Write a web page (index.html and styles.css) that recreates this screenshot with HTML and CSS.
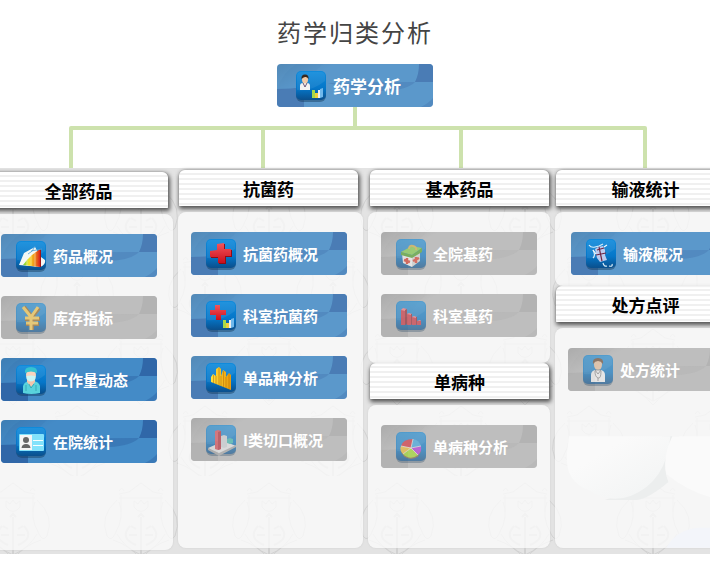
FILE: index.html
```html
<!DOCTYPE html>
<html lang="zh-CN">
<head>
<meta charset="utf-8">
<meta name="viewport" content="width=device-width, initial-scale=1">
<title>药学归类分析</title>
<link rel="stylesheet" href="styles.css">
</head>
<body>
<svg class="defs" aria-hidden="true">
  <defs>
    <linearGradient id="tile-fill" x1="0" y1="0" x2="0" y2="1">
      <stop offset="0" stop-color="#0f8bdc"/><stop offset=".6" stop-color="#0576c8"/><stop offset="1" stop-color="#0a4f8c"/>
    </linearGradient>
    <linearGradient id="corner" x1="0" y1="0" x2="1" y2="1">
      <stop offset="0" stop-color="#000" stop-opacity=".1"/><stop offset=".5" stop-color="#000" stop-opacity="0"/>
    </linearGradient>
    <linearGradient id="spectrum"><stop offset="0" stop-color="#5fd03c"/><stop offset=".35" stop-color="#f5e222"/><stop offset=".7" stop-color="#f08a1a"/><stop offset="1" stop-color="#d8201c"/></linearGradient>
    <linearGradient id="gold"><stop offset="0" stop-color="#ffe23c"/><stop offset="1" stop-color="#e79a0c"/></linearGradient>
    <linearGradient id="red" x1="0" y1="0" x2="0" y2="1"><stop offset="0" stop-color="#f4565c"/><stop offset="1" stop-color="#c90f1c"/></linearGradient>
    <linearGradient id="ball" x1="0" y1="0" x2="1" y2="1"><stop offset=".3" stop-color="#fafafa"/><stop offset="1" stop-color="#f1f3f3"/></linearGradient>
  </defs>
  <symbol id="swirl" viewBox="0 0 156 43" preserveAspectRatio="none">
    <path class="shade" d="M142 0H156V18H138Q142 10 142 0Z"/>
    <path class="shade" d="M0 25Q14 25 27 23V43H0Z"/>
    <path class="shade soft" d="M51 19Q96 18 138 18Q130 26 108 27Q78 27 51 19Z"/>
    <path class="shade soft" d="M27 23Q34 10 46 0H20Q6 8 0 25Q14 25 27 23Z" opacity=".25"/>
    <path class="shade soft" d="M144 43Q152 39 156 34V43Z"/>
    <rect width="60" height="30" fill="url(#corner)"/>
  </symbol>
  <symbol id="tile" viewBox="0 0 32 33">
    <rect x="1" y="2" width="30" height="30" rx="6" fill="#123a5c" opacity=".45"/>
    <rect x="1" y="1" width="30" height="29" rx="5" fill="url(#tile-fill)"/>
    <path d="M2 20Q16 22 30 11V6Q30 2 26 2H6Q2 2 2 6Z" fill="#fff" opacity=".08"/>
  </symbol>
  <symbol id="i-doctor-bars" viewBox="0 0 32 33">
    <use href="#tile" width="32" height="33"/>
    <path d="M5 20V16Q5 13 8 13H12Q15 13 15 16V20Z" fill="#f3f3f3"/>
    <ellipse cx="10" cy="9.500" rx="3" ry="4" fill="#f2c9a5"/><path d="M6.500 9Q6 4.500 10 4.500T13.500 9Q12 6.500 10 7T6.500 9Z" fill="#38281e"/>
    <path d="M8 13L10 17 12 13" fill="none" stroke="#657"/>
    <path d="M17 20h3v4h3v-3h2v7h-8z" fill="#a6d94a"/><path d="M20 23h3v5h-3z" fill="#f1cf3a"/><path d="M23 20h2v8h-2z" fill="#eee"/><path d="M25 19l3-1v9l-3 1z" fill="#6fb8ec"/>
  </symbol>
  <symbol id="i-area" viewBox="0 0 32 33">
    <use href="#tile" width="32" height="33"/>
    <path d="M9 13L20 7 26 17 30 20Q31 25 25 27L4 25Z" fill="#f4f7f4"/>
    <path d="M8 25L12 20 17 15 21 12 25 9V27Z" fill="url(#spectrum)"/><path d="M12 20V26M16 16V26M20 13V27" stroke="#fff" stroke-opacity=".4"/><path d="M25 9l1 1v17h-1z" fill="#a21515"/><path d="M13 14Q18 12 20 6M16 11L27 9" stroke="#4e9fd6" stroke-width=".8" fill="none"/>
  </symbol>
  <symbol id="i-yen" viewBox="0 0 32 33">
    <use href="#tile" width="32" height="33"/>
    <g fill="none" stroke-linejoin="round"><path d="M9 5L17 15 24 6M17 15V28M10 17H25M11 22H24" stroke="#986820" stroke-width="4"/><path d="M8 5L16 15 23 5M16 15V28M10 16H24M11 21H23" stroke="#ffd04c" stroke-width="3"/></g>
  </symbol>
  <symbol id="i-surgeon" viewBox="0 0 32 33">
    <use href="#tile" width="32" height="33"/>
    <path d="M8 29V22Q9 18 14 17H19Q24 18 25 22V29Q16 31 8 29Z" fill="#59d2dc"/><path d="M12 18L16 23 20 18V14H12Z" fill="#f3c4ac"/>
    <ellipse cx="16" cy="11" rx="5" ry="6" fill="#f8d4bd"/><path d="M10 9Q9 3 16 3T22 9Q16 6 10 9Z" fill="#36c3d0"/><path d="M11.500 12Q16 11 20.500 12V15Q16 20 11.500 15Z" fill="#c7f6f5"/><path d="M11 21V27M21 21V27M14 20L16 24 19 20" stroke="#239da9" stroke-width=".7" fill="none"/>
  </symbol>
  <symbol id="i-card" viewBox="0 0 32 33">
    <use href="#tile" width="32" height="33"/>
    <rect x="4" y="8" width="25" height="17" rx="1" fill="#83e2fb"/><rect x="5" y="9" width="12" height="15" fill="#f6f6f6"/>
    <circle cx="11" cy="14" r="3" fill="#676767"/><path d="M6.500 22Q7 18 11 18T15.500 22Z" fill="#676767"/><path d="M18 14.500H28M18 19.500H28" stroke="#f7ffff" stroke-width="1"/>
  </symbol>
  <symbol id="i-cross" viewBox="0 0 32 33">
    <use href="#tile" width="32" height="33"/>
    <path d="M13 6H20V12H27V19H21V26H14V20H6V14H13Z" fill="#8f0c15"/><path d="M12 6L19 5V11L26 11V18H20V25H13V19H5V13L12 12Z" fill="url(#red)"/>
  </symbol>
  <symbol id="i-cross-bars" viewBox="0 0 32 33">
    <use href="#tile" width="32" height="33"/>
    <path d="M10 5H15V10H21V15H16V20H11V15H5V10H10Z" fill="url(#red)"/>
    <path d="M18 20h3v4h3v-3h2v7h-8z" fill="#a6d94a"/><path d="M21 23h3v5h-3z" fill="#f1cf3a"/><path d="M24 20h2v8h-2z" fill="#eee"/><path d="M26 19l3-1v9l-3 1z" fill="#6fb8ec"/>
  </symbol>
  <symbol id="i-gold-bars" viewBox="0 0 32 33">
    <use href="#tile" width="32" height="33"/>
    <path d="M6 15L8 12 11 14V7L14 5 16 7V14L18 8 21 10V15L24 11 26 13V28L16 24 6 20Z" fill="url(#gold)"/><path d="M8.500 13V21M11 14V22M14 6V23M16 14V24M18.500 9V25M21 15V26M24 12V27" stroke="#bd7408" fill="none" stroke-width=".6"/>
  </symbol>
  <symbol id="i-3d-bars" viewBox="0 0 32 33">
    <use href="#tile" width="32" height="33"/>
    <path d="M3 24L19 17 31 22 14 31Z" fill="#eee"/><path d="M3 24L14 29 31 21V23L14 32 3 26Z" fill="#aaa"/>
    <path d="M10 7l3-1 3 1v18l-3 1-3-1z" fill="#e34b57"/><path d="M13 8l3-1v18l-3 1z" fill="#ba2835"/><path d="M16 12l3-1 3 1v11l-3 1-3-1z" fill="#d5d9dc"/><path d="M22 15l3-1 3 1v4l-3 1-3-1z" fill="#38bcb2"/>
  </symbol>
  <symbol id="i-kit" viewBox="0 0 32 33">
    <use href="#tile" width="32" height="33"/>
    <path d="M7 15L17 19V29L8 25Z" fill="#fff"/><path d="M17 19L25 13V23L17 29Z" fill="#dfdcd9"/><path d="M6 14L17 8 27 10 17 17Z" fill="#83d244"/><path d="M6 14L17 17V20L6 17ZM17 17L27 10V14L17 20Z" fill="#4da522"/><path d="M14 11Q14 7 18 8T21 12" fill="none" stroke="#d7b444" stroke-width="2"/><path d="M12 20V26M9 22L15 24M21 19V25M18 23L24 20" stroke="#e13a28" stroke-width="2.500"/>
  </symbol>
  <symbol id="i-red-bars" viewBox="0 0 32 33">
    <use href="#tile" width="32" height="33"/>
    <path d="M6 10h4v15H6zM12 14h4v11h-4zM17 17h4v8h-4zM22 21h4v4h-4z" fill="#d3303d"/><path d="M6 10l2-2 4 1-2 2zM12 14l2-1 3 1-1 1zM17 17l2-1 3 1-1 1zM22 21l3-1 1 1z" fill="#ff7781"/><path d="M10 10l2-1v15l-2 1zM16 14l1 0v10l-1 1zM21 17l1 0v7l-1 1z" fill="#95202c"/>
  </symbol>
  <symbol id="i-pie" viewBox="0 0 32 33">
    <use href="#tile" width="32" height="33"/>
    <ellipse cx="16" cy="18.500" rx="10" ry="9.500" fill="#82643c"/>
    <path d="M16 17L6 15Q8 8 18 8Z" fill="#dc2b36"/><path d="M16 17L18 8Q24 9 26 15Z" fill="#36a9e8"/><path d="M16 17L26 15Q27 21 23 24Z" fill="#b62fe2"/><path d="M16 17L23 24Q15 30 8 23Z" fill="#a4e224"/><path d="M16 17L8 23Q4 19 6 15Z" fill="#fac130"/><path d="M16 17L6 15M16 17L18 8M16 17L26 15M16 17L23 24M16 17L8 23" stroke="#fff" stroke-width=".7"/>
  </symbol>
  <symbol id="i-infusion" viewBox="0 0 32 33">
    <use href="#tile" width="32" height="33"/>
    <path d="M4 7Q6 10 10 9L14 8 18 6M8 20Q11 17 8 12M18 25Q19 29 22 28M24 28Q28 29 27 26" fill="none" stroke="#d9eef9" stroke-width="1.200"/>
    <path d="M10 11L13 9 18 8 20 12 20 17 22 22 15 24 12 20Z" fill="#bccbee"/><path d="M11 17L21 15M14 9L17 23M12 12L19 10" stroke="#702744" stroke-width="1.200"/><path d="M8 12L11 16M19 9L22 7" stroke="#f4f8fc" stroke-width="1.200" fill="none"/>
  </symbol>
  <symbol id="i-doctor" viewBox="0 0 32 33">
    <use href="#tile" width="32" height="33"/>
    <path d="M9 28V21Q9 17 13 16H19Q23 17 23 21V28Z" fill="#fff"/><ellipse cx="16" cy="10.500" rx="4" ry="5.500" fill="#f6c9a2"/><path d="M11 10Q10 4 16 4T21 10Q19 7 16 7T11 10Z" fill="#6d4931"/><path d="M13 16L16 20 19 16ZM13 17Q13 23 16 24T19 17M16 24V27" fill="none" stroke="#777" stroke-width=".8"/>
  </symbol>
</svg>

<header class="masthead">
  <h1 class="title">药学归类分析</h1>
  <button class="tile-btn" type="button"><svg class="swirl"><use href="#swirl"/></svg><svg class="icon"><use href="#i-doctor-bars"/></svg><span class="root-label">药学分析</span></button>
</header>
<svg class="connector" viewBox="0 0 710 61" preserveAspectRatio="none" aria-hidden="true">
  <path d="M355 0V21M71 61V21H645V61M263 21V61M461 21V61" fill="none" stroke="#cde2ad" stroke-width="4" stroke-linejoin="round"/>
</svg>

<main class="board">
  <svg class="crests" aria-hidden="true">
    <defs>
      <g id="crest" fill="none" stroke="#777" stroke-width="1">
        <path d="M-22 -26L-12 -28 0 -37 12 -28 22 -26M-22 -22H22M-20 -25V-8M20 -25V-8M-22 -29q3 -5 5 0M17 -29q3 -5 5 0"/>
        <path d="M-24 -20Q-42 -4 -34 16Q-30 22 -26 14Q-16 -4 -22 -18M24 -20Q42 -4 34 16Q30 22 26 14Q16 -4 22 -18"/>
        <path d="M-7 -19V-13Q0 -4 7 -13V-19L3 -16 0 -20 -3 -16Z"/>
        <path d="M0 -3V35M-3 -3L0 -6 3 -3M-11 6Q-22 18 -5 25M-10 6L-5 9M-12 15H-4M11 6Q22 18 5 25M10 6L5 9M12 15H4" stroke-width="2"/>
        <path d="M-28 20Q-12 25 0 39Q12 25 28 20M-24 14Q-16 28 0 35Q16 28 24 14"/>
      </g>
      <pattern id="crest-grid" width="128" height="154" patternUnits="userSpaceOnUse">
        <use href="#crest" x="26" y="44"/><use href="#crest" x="90" y="121"/>
        <use href="#crest" x="154" y="44"/>
      </pattern>
    </defs>
    <rect width="100%" height="100%" fill="url(#crest-grid)"/>
  </svg>

  <div class="column column-lowered">
    <section class="group grow">
      <h2 class="heading">全部药品</h2>
      <div class="panel">
        <button class="tile-btn" type="button"><svg class="swirl"><use href="#swirl"/></svg><svg class="icon"><use href="#i-area"/></svg><span>药品概况</span></button>
        <button class="tile-btn muted" type="button"><svg class="swirl"><use href="#swirl"/></svg><svg class="icon"><use href="#i-yen"/></svg><span>库存指标</span></button>
        <button class="tile-btn vivid" type="button"><svg class="swirl"><use href="#swirl"/></svg><svg class="icon"><use href="#i-surgeon"/></svg><span>工作量动态</span></button>
        <button class="tile-btn vivid" type="button"><svg class="swirl"><use href="#swirl"/></svg><svg class="icon"><use href="#i-card"/></svg><span>在院统计</span></button>
      </div>
    </section>
  </div>

  <div class="column">
    <section class="group grow">
      <h2 class="heading">抗菌药</h2>
      <div class="panel">
        <button class="tile-btn" type="button"><svg class="swirl"><use href="#swirl"/></svg><svg class="icon"><use href="#i-cross"/></svg><span>抗菌药概况</span></button>
        <button class="tile-btn" type="button"><svg class="swirl"><use href="#swirl"/></svg><svg class="icon"><use href="#i-cross-bars"/></svg><span>科室抗菌药</span></button>
        <button class="tile-btn" type="button"><svg class="swirl"><use href="#swirl"/></svg><svg class="icon"><use href="#i-gold-bars"/></svg><span>单品种分析</span></button>
        <button class="tile-btn muted" type="button"><svg class="swirl"><use href="#swirl"/></svg><svg class="icon"><use href="#i-3d-bars"/></svg><span>I类切口概况</span></button>
      </div>
    </section>
  </div>

  <div class="column column-inset">
    <section class="group">
      <h2 class="heading">基本药品</h2>
      <div class="panel">
        <button class="tile-btn muted" type="button"><svg class="swirl"><use href="#swirl"/></svg><svg class="icon"><use href="#i-kit"/></svg><span>全院基药</span></button>
        <button class="tile-btn muted" type="button"><svg class="swirl"><use href="#swirl"/></svg><svg class="icon"><use href="#i-red-bars"/></svg><span>科室基药</span></button>
      </div>
    </section>
    <section class="group grow">
      <h2 class="heading">单病种</h2>
      <div class="panel">
        <button class="tile-btn muted" type="button"><svg class="swirl"><use href="#swirl"/></svg><svg class="icon"><use href="#i-pie"/></svg><span>单病种分析</span></button>
      </div>
    </section>
  </div>

  <div class="column column-last">
    <section class="group compact">
      <h2 class="heading">输液统计</h2>
      <div class="panel">
        <button class="tile-btn" type="button"><svg class="swirl"><use href="#swirl"/></svg><svg class="icon"><use href="#i-infusion"/></svg><span>输液概况</span></button>
      </div>
    </section>
    <section class="group grow">
      <h2 class="heading">处方点评</h2>
      <div class="panel">
        <button class="tile-btn muted" type="button"><svg class="swirl"><use href="#swirl"/></svg><svg class="icon"><use href="#i-doctor"/></svg><span>处方统计</span></button>
        <svg class="orbs" viewBox="0 0 186 112" aria-hidden="true">
          <path d="M50 64Q100 50 108 0H125Q104 22 114 46Q94 63 82 64Z" fill="#eceeee"/>
          <path d="M14 0H116Q112 46 76 60Q54 68 34 54Q10 46 12 18Z" fill="url(#ball)"/>
          <path d="M118 0H186V64Q146 66 112 38Q108 20 118 0Z" fill="#fafafa"/>
          <path d="M112 112Q122 94 144 92H186V112Z" fill="#f3f5fa"/>
        </svg>
      </div>
    </section>
  </div>
</main>
</body>
</html>
```

FILE: styles.css
```css
* {
  box-sizing: border-box;
}

body {
  margin: 0;
  background: #fff;
  font-family: "Noto Sans CJK SC", "Liberation Sans", sans-serif;
  overflow-x: hidden;
}

.defs {
  position: absolute;
  width: 0;
  height: 0;
}

.masthead {
  display: flex;
  flex-direction: column;
  align-items: center;
  gap: 14px;
  padding-top: 14px;
}

.title {
  margin: 0;
  color: #444;
  font-size: 24px;
  font-weight: 400;
  line-height: 36px;
  letter-spacing: 2px;
}

.connector {
  display: block;
  width: 100%;
  height: 61px;
}

.tile-btn {
  --base: #5b98cb;
  --shade: #4a7cb5;
  position: relative;
  display: flex;
  align-items: center;
  gap: 6px;
  flex: none;
  width: 156px;
  height: 43px;
  padding: 1px 0 0 14px;
  border: 0;
  border-radius: 4px;
  overflow: hidden;
  background: var(--base);
  color: #fff;
  font: 700 15px/22px "Noto Sans CJK SC", "Liberation Sans", sans-serif;
  white-space: nowrap;
  cursor: pointer;
}

.tile-btn span {
  position: relative;
}

.tile-btn .root-label {
  font-size: 17px;
}

.masthead .tile-btn {
  padding-left: 18px;
}

.vivid {
  --base: #448bc7;
  --shade: #3067a8;
}

.muted {
  --base: #bebebe;
  --shade: #b3b3b3;
}

.swirl {
  position: absolute;
  inset: 0;
  width: 100%;
  height: 100%;
}

.shade {
  fill: var(--shade);
}

.soft {
  fill-opacity: 0.5;
}

.icon {
  position: relative;
  flex: none;
  width: 32px;
  height: 33px;
}

.muted .icon {
  opacity: 0.6;
}

.board {
  position: relative;
  display: grid;
  grid-template-columns: 190fr 190fr 187fr 190fr;
  margin: 0 -34px 0 -13px;
  background: #e3e3e3;
}

.crests {
  position: absolute;
  inset: 0;
  width: 100%;
  height: 100%;
  opacity: 0.16;
}

.column {
  position: relative;
  display: flex;
  flex-direction: column;
  padding: 2px 4px 6px 1px;
}

.column-lowered {
  padding-top: 4px;
  padding-bottom: 4px;
}

.group {
  display: flex;
  flex-direction: column;
}

.grow {
  flex: 1;
}

.heading {
  height: 36px;
  margin: 0 5px 6px 1px;
  border-radius: 6px 6px 1px 1px;
  background: repeating-linear-gradient(#fff 0 3px, #f0f0f0 3px 5px);
  box-shadow: 1px 2px 4px 1px #555, 0 0 1px #999;
  color: #000;
  font-size: 17px;
  font-weight: 700;
  line-height: 38px;
  text-align: center;
}

.column-inset .heading {
  margin-right: 1px;
  margin-left: 2px;
}

.panel {
  position: relative;
  display: flex;
  flex: 1;
  flex-direction: column;
  gap: 19px;
  padding: 20px 0 26px 13px;
  border-radius: 8px;
  background: rgba(251, 251, 251, 0.78);
  box-shadow: 0 0 2px #ccc;
}

.grow .panel {
  padding-bottom: 78px;
}

.compact .panel {
  padding-bottom: 11px;
}

.column-last .compact .panel {
  padding-left: 16px;
}

.orbs {
  position: absolute;
  right: 0;
  bottom: 0;
  width: 100%;
  height: 112px;
}

.column-lowered .panel {
  padding-bottom: 87px;
}
```
